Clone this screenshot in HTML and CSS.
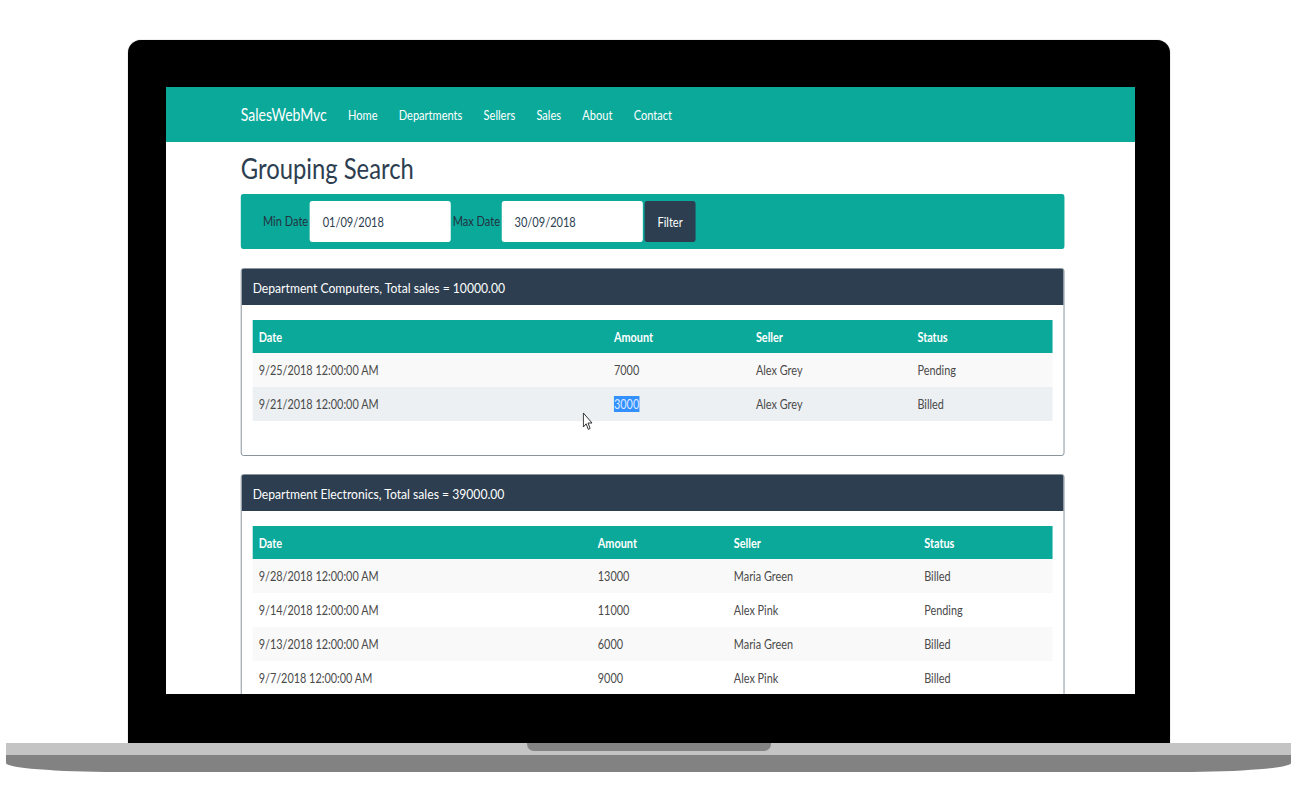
FILE: index.html
```html
<!DOCTYPE html>
<html lang="en">
<head>
<meta charset="utf-8">
<title>Grouping Search - SalesWebMvc</title>
<link rel="stylesheet" href="styles.css">
</head>
<body>
<div class="device">
  <div class="bezel">
    <div class="screen">
      <div class="page">
        <nav class="navbar">
          <span class="brand">SalesWebMvc</span>
          <ul class="nav">
            <li>Home</li>
            <li>Departments</li>
            <li>Sellers</li>
            <li>Sales</li>
            <li>About</li>
            <li>Contact</li>
          </ul>
        </nav>
        <main class="container">
          <h1 class="title">Grouping Search</h1>
          <form class="filter">
            <label class="flabel">Min Date</label>
            <div class="finput">01/09/2018</div>
            <label class="flabel">Max Date</label>
            <div class="finput">30/09/2018</div>
            <button type="button" class="fbtn">Filter</button>
          </form>

          <section class="panel">
            <div class="panel-head">Department Computers, Total sales = 10000.00</div>
            <div class="panel-body">
              <table class="tbl tbl-a">
                <colgroup><col><col><col><col></colgroup>
                <thead>
                  <tr><th>Date</th><th>Amount</th><th>Seller</th><th>Status</th></tr>
                </thead>
                <tbody>
                  <tr><td>9/25/2018 12:00:00 AM</td><td>7000</td><td>Alex Grey</td><td>Pending</td></tr>
                  <tr class="hover"><td>9/21/2018 12:00:00 AM</td><td><span class="sel">3000</span></td><td>Alex Grey</td><td>Billed</td></tr>
                </tbody>
              </table>
            </div>
          </section>

          <section class="panel">
            <div class="panel-head">Department Electronics, Total sales = 39000.00</div>
            <div class="panel-body">
              <table class="tbl tbl-b">
                <colgroup><col><col><col><col></colgroup>
                <thead>
                  <tr><th>Date</th><th>Amount</th><th>Seller</th><th>Status</th></tr>
                </thead>
                <tbody>
                  <tr><td>9/28/2018 12:00:00 AM</td><td>13000</td><td>Maria Green</td><td>Billed</td></tr>
                  <tr><td>9/14/2018 12:00:00 AM</td><td>11000</td><td>Alex Pink</td><td>Pending</td></tr>
                  <tr><td>9/13/2018 12:00:00 AM</td><td>6000</td><td>Maria Green</td><td>Billed</td></tr>
                  <tr><td>9/7/2018 12:00:00 AM</td><td>9000</td><td>Alex Pink</td><td>Billed</td></tr>
                </tbody>
              </table>
            </div>
          </section>
        </main>
        <svg class="cursor" width="13" height="19" viewBox="0 0 13 19" aria-hidden="true">
          <path d="M1 1 L1 15 L4.3 11.8 L6.8 17.4 L9 16.4 L6.5 11 L11.2 11 Z" fill="#fff" stroke="#222" stroke-width="1" stroke-linejoin="round"/>
        </svg>
      </div>
    </div>
  </div>
  <div class="base">
    <div class="base-top"><div class="notch"></div></div>
    <div class="base-bottom"></div>
  </div>
</div>
</body>
</html>
```

FILE: styles.css
```css
* { box-sizing: border-box; }

html, body {
  margin: 0;
  padding: 0;
  background: #ffffff;
}

body {
  width: 1315px;
  height: 795px;
  overflow: hidden;
  font-family: Lato, "Open Sans", "Liberation Sans", sans-serif;
}

.device {
  padding-top: 40px;
}

.bezel {
  margin-left: 128px;
  width: 1042px;
  height: 703px;
  background: #000;
  border-radius: 13px 13px 0 0;
  padding: 47px 35px 49px 38px;
  box-shadow: 0 0 1px rgba(0,0,0,0.6);
}

.screen {
  width: 969px;
  height: 607px;
  background: #fff;
  overflow: hidden;
}

/* the captured page is horizontally compressed in the recording */
.page {
  position: relative;
  width: 1140px;
  height: 607px;
  transform: scaleX(0.85);
  transform-origin: 0 0;
}

/* navbar */
.navbar {
  height: 55px;
  background: #0ba99a;
  display: flex;
  align-items: center;
  padding-left: 88px;
  color: #fff;
}

.brand {
  font-size: 16.5px;
  margin-right: 25px;
}

.nav {
  list-style: none;
  margin: 0;
  padding: 0;
  display: flex;
  gap: 25px;
  font-size: 13px;
}

/* content */
.container {
  margin-left: 88px;
  width: 969px;
}

.title {
  margin: 10px 0 10px;
  font-size: 28px;
  line-height: 32px;
  font-weight: 400;
  color: #2c3e50;
}

.filter {
  margin: 0;
  height: 55px;
  background: #0ba99a;
  border-radius: 3px;
  display: flex;
  align-items: flex-start;
  padding: 7px 0 7px 26px;
}

.flabel {
  font-size: 13px;
  color: #22313f;
  padding-top: 12px;
  margin-right: 2px;
  white-space: nowrap;
}

.finput {
  width: 166px;
  height: 41px;
  background: #fff;
  border-radius: 3px;
  margin-right: 2px;
  padding-left: 15px;
  display: flex;
  align-items: center;
  font-size: 13px;
  color: #2c3e50;
}

.fbtn {
  width: 60px;
  height: 41px;
  background: #2c3e50;
  color: #fff;
  border: 0;
  border-radius: 3px;
  font-family: inherit;
  font-size: 13px;
  padding: 0;
}

/* panels */
.panel {
  margin-top: 19px;
  border: 1px solid #7f8b94;
  border-radius: 3px;
  overflow: hidden;
}

.panel + .panel {
  margin-top: 18px;
}

.panel-head {
  height: 36px;
  background: #2c3e50;
  color: #fff;
  font-size: 14.3px;
  display: flex;
  align-items: center;
  padding-left: 13px;
}

.panel-body {
  padding: 15px 13px 14px;
}

/* header band and row stripes are painted once on the table,
   so the horizontal scaling leaves no seams between cells */
.tbl {
  width: 941px;
  border-collapse: collapse;
  table-layout: fixed;
  margin-bottom: 20px;
  font-size: 12.8px;
  color: #4a4a4a;
  background:
    linear-gradient(to bottom, #0ba99a 0, #0ba99a 33px, transparent 33px),
    repeating-linear-gradient(to bottom, #f9f9f9 0, #f9f9f9 34px, #ffffff 34px, #ffffff 68px);
  background-repeat: no-repeat;
  background-position: 0 0, 0 33px;
  background-size: 100% 100%, 100% 100%;
}

.tbl-a {
  background: linear-gradient(to bottom,
    #0ba99a 0, #0ba99a 33px,
    #f9f9f9 33px, #f9f9f9 67px,
    #ecf0f3 67px, #ecf0f3 101px,
    #ffffff 101px);
}

.tbl th {
  color: #fff;
  font-weight: 700;
  text-align: left;
  height: 33px;
  padding: 0 7px;
}

.tbl td {
  height: 34px;
  padding: 0 7px;
}

.tbl-a col:nth-child(1) { width: 418px; }
.tbl-a col:nth-child(2) { width: 167px; }
.tbl-a col:nth-child(3) { width: 190px; }
.tbl-a col:nth-child(4) { width: 166px; }

.tbl-b col:nth-child(1) { width: 399px; }
.tbl-b col:nth-child(2) { width: 160px; }
.tbl-b col:nth-child(3) { width: 224px; }
.tbl-b col:nth-child(4) { width: 158px; }

.sel {
  background: #3390ff;
  color: #dfeaff;
}

.cursor {
  position: absolute;
  left: 490px;
  top: 325px;
}

/* base */
.base {
  margin-left: 6px;
  width: 1285px;
}

.base-top {
  height: 12px;
  background: #c4c4c4;
  display: flex;
  justify-content: center;
}

.notch {
  width: 244px;
  height: 8px;
  background: #838383;
  border-radius: 0 0 7px 7px;
}

.base-bottom {
  height: 17px;
  background: #828282;
  border-radius: 0 0 110px 110px / 0 0 9px 9px;
}
```
